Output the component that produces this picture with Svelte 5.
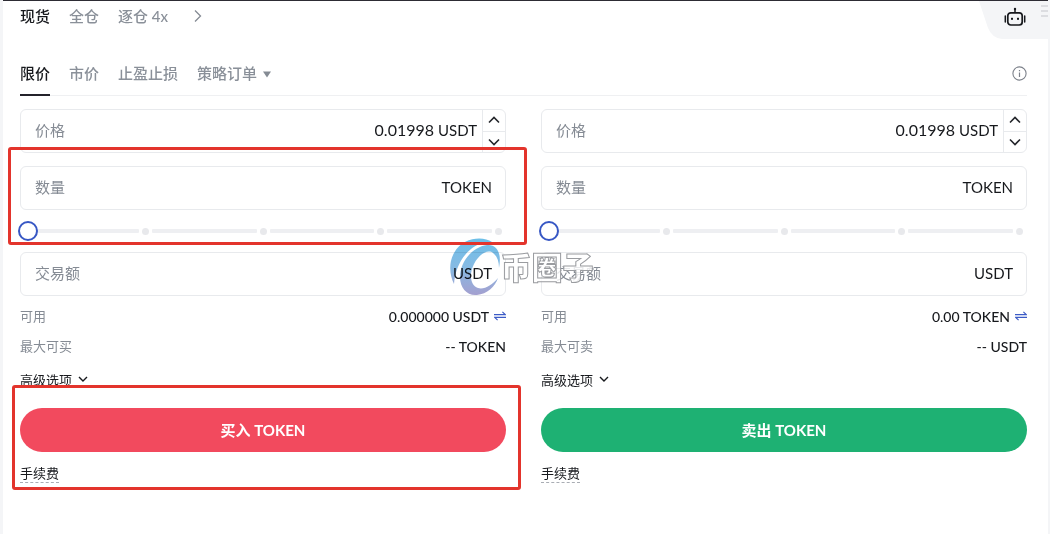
<script>
  const modes = ['现货', '全仓', '逐仓 4x'];
  const orderTypes = ['限价', '市价', '止盈止损', '策略订单'];
  const sides = [
    { id: 'buy', action: '买入', max: '最大可买', free: '0.000000 USDT', most: '-- TOKEN' },
    { id: 'sell', action: '卖出', max: '最大可卖', free: '0.00 TOKEN', most: '-- USDT' }
  ];
  let mode = $state(0);
  let orderType = $state(0);
</script>

<main class="panel">
  <header class="top">
    <nav class="modes" aria-label="账户模式">
      {#each modes as name, i}
        <button class="tab" class:active={mode === i} onclick={() => (mode = i)}>{name}</button>
      {/each}
      <button class="tab more" aria-label="更多">
        <svg width="8" height="14" viewBox="0 0 8 14"><path d="M1 1.5 6.5 7 1 12.5" fill="none" stroke="#858b94" stroke-width="1.3" /></svg>
      </button>
    </nav>
    <div class="corner">
      <svg class="corner-shape" width="71" height="38" viewBox="0 0 71 38"><path d="M0 0H71V38H23Q13 37 9 27Z" fill="#f4f5f7" /></svg>
      <button class="robot" aria-label="交易机器人">
        <svg width="22" height="20" viewBox="0 0 22 20" fill="none" stroke="#17191d">
          <rect x="3.8" y="5.8" width="14.4" height="12.2" rx="3" stroke-width="1.7" />
          <path d="M11 5.5V2" stroke-width="1.5" />
          <path d="M1.3 9v6M20.7 9v6" stroke-width="1.5" stroke-linecap="round" />
          <circle cx="11" cy="2" r="1.2" fill="#17191d" stroke="none" />
          <rect x="7" y="10.8" width="2" height="2" fill="#17191d" stroke="none" />
          <rect x="13" y="10.8" width="2" height="2" fill="#17191d" stroke="none" />
        </svg>
      </button>
      <svg class="grip" width="7" height="12" viewBox="0 0 7 12"><path d="M0 1h7M0 6h7M0 11h7" stroke="#d3d5da" stroke-width="1.4" /></svg>
    </div>
  </header>

  <nav class="types" aria-label="订单类型">
    {#each orderTypes as name, i}
      <button class="tab" class:active={orderType === i} onclick={() => (orderType = i)}>
        {name}
        {#if i === 3}
          <svg class="caret" width="8" height="7" viewBox="0 0 8 7"><path d="M0 .5h8L4 6.5Z" fill="#858b94" /></svg>
        {/if}
      </button>
    {/each}
    <button class="info" aria-label="说明">
      <svg width="15" height="15" viewBox="0 0 15 15"><circle cx="7.5" cy="7.5" r="6.6" fill="none" stroke="#7d828b" stroke-width="1.1" /><path d="M7.5 6.5V11M7.5 4v1.3" stroke="#7d828b" stroke-width="1.2" /></svg>
    </button>
  </nav>

  <div class="forms">
    {#each sides as side}
      <form class="side" onsubmit={(e) => e.preventDefault()}>
        <div class="field price">
          <label for="{side.id}-price">价格</label>
          <input id="{side.id}-price" value="0.01998" />
          <span class="unit">USDT</span>
          <div class="steps">
            <button type="button" aria-label="加"><svg width="12" height="8" viewBox="0 0 12 8"><path d="M1 6.5 6 1.5l5 5" /></svg></button>
            <button type="button" aria-label="减"><svg width="12" height="8" viewBox="0 0 12 8"><path d="M1 1.5l5 5 5-5" /></svg></button>
          </div>
        </div>

        <div class="group">
          <div class="field">
            <label for="{side.id}-amount">数量</label>
            <input id="{side.id}-amount" />
            <span class="unit">TOKEN</span>
          </div>
          <div class="slider">
            <div class="rail">
              {#each [25, 50, 75, 100] as stop (stop)}
                <i class="seg"></i><i class="dot"></i>
              {/each}
            </div>
            <input type="range" min="0" max="100" value="0" aria-label="数量比例" />
          </div>
          {#if side.id === 'buy'}<div class="mark mark-amount"></div>{/if}
        </div>

        <div class="field">
          <label for="{side.id}-total">交易额</label>
          <input id="{side.id}-total" />
          <span class="unit">USDT</span>
        </div>

        <dl class="facts">
          <div>
            <dt>可用</dt>
            <dd>
              {side.free}
              <svg width="12" height="10" viewBox="0 0 12 10"><path d="M0 3.6h11.2L8.4.8M12 6.4H.8l2.8 2.8" fill="none" stroke="#3c5bc6" stroke-width="1.1" /></svg>
            </dd>
          </div>
          <div><dt>{side.max}</dt><dd>{side.most}</dd></div>
        </dl>

        <button type="button" class="advanced">
          高级选项
          <svg width="10" height="6" viewBox="0 0 10 6"><path d="M1 1l4 4 4-4" fill="none" stroke="#17191d" stroke-width="1.4" /></svg>
        </button>

        <div class="group">
          <button class="submit {side.id}">{side.action} TOKEN</button>
          <a class="fee" href="#fee">手续费</a>
          {#if side.id === 'buy'}<div class="mark mark-submit"></div>{/if}
        </div>
      </form>
    {/each}

    <div class="watermark">
      <svg width="52" height="58" viewBox="0 0 52 58">
        <defs>
          <linearGradient id="wm" gradientUnits="userSpaceOnUse" x1="26" y1="0" x2="26" y2="58">
            <stop offset="0" stop-color="#6cbfe8" /><stop offset=".5" stop-color="#86bae3" /><stop offset="1" stop-color="#a59fcf" />
          </linearGradient>
        </defs>
        <path d="M43 4C34-2 14-1 5 15-1 26 1 38 5 46 6 33 11 20 22 11 28 6 36 4 43 4Z" fill="url(#wm)" />
        <path d="M50 30C53 15 48 6 38 7 23 9 11 24 11 39 11 50 18 58 28 57 38 56 46 49 49 40 43 47 35 52 29 50 21 47 20 36 25 26 30 16 39 11 44 15 48 18 50 23 50 30Z" fill="url(#wm)" />
      </svg>
      <span>币圈子</span>
    </div>
  </div>
</main>

<style>
  :global(body) { margin: 0; background: #fff; }
  .panel {
    box-sizing: border-box;
    min-height: 100vh;
    padding: 0 21px 0 17px;
    border: solid #f4f5f7;
    border-width: 0 2px 0 3px;
    box-shadow: inset 0 1px #2d2c34;
    font-family: Lato, "Noto Sans CJK SC", sans-serif;
    font-size: 15px;
    color: #17191d;
    overflow: hidden;
  }
  button, input { font: inherit; color: inherit; margin: 0; padding: 0; border: 0; background: none; outline: 0; }
  button { cursor: pointer; }
  svg { display: block; flex: none; }

  .top { position: relative; height: 33px; }
  .modes, .types { display: flex; gap: 19px; }
  .modes { height: 31px; align-items: center; }
  .tab { display: flex; align-items: center; gap: 6px; color: #8a9099; font-weight: 500; white-space: nowrap; }
  .tab.active { color: #17191d; }
  .more { margin-left: 7px; }
  .corner { position: absolute; top: 1px; right: -23px; width: 71px; height: 38px; }
  .corner-shape, .robot, .grip { position: absolute; top: 0; left: 0; }
  .robot { top: 6px; left: 25px; }
  .grip { top: 4px; left: 62px; }

  .types { margin-top: 20px; height: 43px; box-shadow: inset 0 -1px #eff0f2; }
  .types .tab { box-sizing: border-box; padding-bottom: 2px; border-bottom: 2px solid transparent; }
  .types .tab.active { border-bottom-color: #24232b; }
  .caret { margin-top: 4px; }
  .info { margin-left: auto; padding-bottom: 2px; }

  .forms { position: relative; display: grid; grid-template-columns: 1fr 1fr; gap: 35px; padding-top: 13px; }
  .side { min-width: 0; }
  .group { position: relative; }
  .field { box-sizing: border-box; display: flex; align-items: center; height: 44px; padding: 0 13px 0 14px; border: 1px solid #e8eaed; border-radius: 6px; }
  .field label { color: #858b94; flex: none; }
  .field input { flex: 1; min-width: 0; text-align: right; font-size: 16px; }
  .field label, .field > input, .unit { padding-bottom: 3px; }
  .unit { margin-left: 4px; }
  .price { margin-bottom: 13px; padding-right: 0; }
  .steps { display: flex; flex-direction: column; align-self: stretch; width: 22px; margin-left: 5px; border-left: 1px solid #e8eaed; }
  .steps button { flex: 1; display: grid; place-items: center; }
  .steps button + button { border-top: 1px solid #e8eaed; }
  .steps path { fill: none; stroke: #24262b; stroke-width: 1.6; }

  .slider { position: relative; height: 42px; display: flex; align-items: center; }
  .rail { flex: 1; display: flex; align-items: center; gap: 3px; padding: 0 4px 0 14px; }
  .seg { flex: 1; height: 4px; border-radius: 1px; background: #eeeff2; }
  .dot { width: 7px; height: 7px; border-radius: 50%; background: #e8e9ec; }
  .slider input { position: absolute; inset: 0 -2px; width: calc(100% + 4px); appearance: none; }
  .slider input::-webkit-slider-thumb { appearance: none; box-sizing: border-box; width: 20px; height: 20px; border: 2px solid #3757c4; border-radius: 50%; background: #fff; }

  .facts { margin: 5px 0 0; font-size: 13px; }
  .facts div { display: flex; justify-content: space-between; align-items: center; height: 30px; }
  .facts dt { color: #858b94; padding-bottom: 2px; }
  .facts dd { display: flex; align-items: center; gap: 5px; margin: 0; font-size: 14px; font-weight: 500; }
  .advanced { display: flex; align-items: center; gap: 6px; height: 36px; margin-bottom: 11px; font-size: 13px; }
  .submit { display: block; width: 100%; height: 44px; padding-bottom: 2px; border-radius: 22px; color: #fff; font-weight: 700; }
  .buy { background: #f24a5e; }
  .sell { background: #1eb173; }
  .fee { display: block; width: max-content; margin-top: 13px; line-height: 17px; border-bottom: 1px dashed #a9adb4; font-size: 13px; color: inherit; text-decoration: none; }

  .mark { position: absolute; z-index: 2; border: 3px solid #e3342c; border-radius: 3px; pointer-events: none; }
  .mark-amount { inset: -19px -21px 7px -12px; }
  .mark-submit { inset: -23px -15px -7px -8px; }

  .watermark { position: absolute; top: 142px; left: calc(50% - 75px); display: flex; align-items: center; pointer-events: none; }
  .watermark svg { mix-blend-mode: multiply; }
  .watermark span { font-size: 31px; line-height: 58px; font-weight: 900; color: rgb(255 255 255 / .8); -webkit-text-stroke: 1px #9a9ca0; white-space: nowrap; }
</style>
